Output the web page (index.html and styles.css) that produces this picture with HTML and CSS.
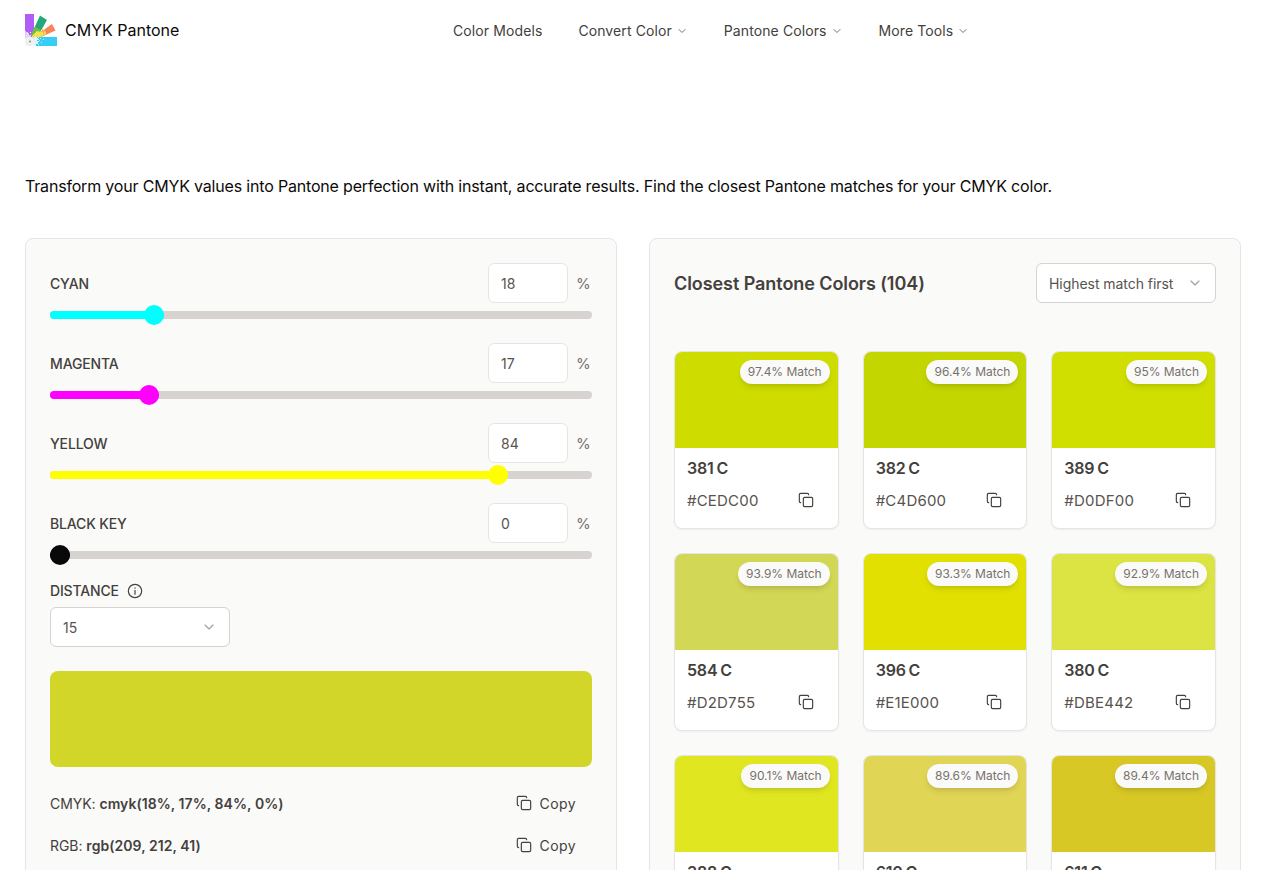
FILE: index.html
```
<!DOCTYPE html>
<html lang="en">
<head>
    <meta charset="UTF-8">
    <meta name="viewport" content="width=device-width, initial-scale=1.0">
    <title>CMYK Pantone</title>
    <link rel="stylesheet" href="styles.css">
</head>
<body>
    <!-- Shared icons -->
    <svg class="icon-defs" aria-hidden="true">
        <symbol id="icon-copy" viewBox="0 0 24 24">
            <rect x="8" y="8" width="14" height="14" rx="2"/>
            <path d="M4 16c-1.1 0-2-.9-2-2V4c0-1.1.9-2 2-2h10c1.1 0 2 .9 2 2"/>
        </symbol>
        <symbol id="icon-chevron" viewBox="0 0 24 24">
            <path d="m6 9 6 6 6-6"/>
        </symbol>
    </svg>

    <div class="page">
        <header class="header">
            <a class="brand" href="#">
                <svg class="logo" viewBox="0 0 32 32">
                    <rect width="9" height="23" fill="#b35cf5"/>
                    <path d="M15 1.5l7 4.5-8.500 15-7-1z" fill="#24a878"/>
                    <path d="M10 13l6 3-5 7-6-1z" fill="#6cc04a"/>
                    <path d="M27 10l3.500 6.500L16 23l-3-3z" fill="#fa8358"/>
                    <path d="M7 22l5-5 4 1 2-2 3 1v3l-8 4H7z" fill="#f4e34f"/>
                    <path d="M17 15h1v1h1v1h2v1h-2v2h-1v-2h-2v-1h1z" fill="#f5b44b"/>
                    <path d="M0 17h1v1h2v1h1v2h2v2h3v2H0z" fill="#e2c9f6"/>
                    <path d="M2 19h1v1H2zM5 18h1v1H5zM3 21h1v1H3zM1 21h1v1H1z" fill="#fff"/>
                    <rect x="9" y="23" width="23" height="9" fill="#38cdf5"/>
                    <path d="M9 23h3v1h1v1h1v1h-2v1h2v1h-1v2h-2v2H9z" fill="#dcf5f8"/>
                    <path d="M13 23h1v1h-1zM15 24h1v1h-1zM14 26h1v1h-1zM16 28h1v1h-1zM13 30h1v1h-1zM18 25h1v1h-1z" fill="#c4f0f8"/>
                    <rect y="23" width="9" height="9" rx="3" fill="#f0f0ef"/>
                    <circle cx="5" cy="27.500" r="1" fill="#8b8b8b"/>
                </svg>
                <span class="brand-name">CMYK Pantone</span>
            </a>
            <nav class="nav">
                <a href="#">Color Models</a>
                <a href="#">Convert Color <svg class="icon"><use href="#icon-chevron"/></svg></a>
                <a href="#">Pantone Colors <svg class="icon"><use href="#icon-chevron"/></svg></a>
                <a href="#">More Tools <svg class="icon"><use href="#icon-chevron"/></svg></a>
            </nav>
        </header>

        <p class="intro">Transform your CMYK values into Pantone perfection with instant, accurate results. Find the closest Pantone matches for your CMYK color.</p>

        <main class="panels">
            <section class="panel">
                <div id="channels"></div>

                <div class="distance-label">
                    <span class="label">DISTANCE</span>
                    <svg class="icon info" viewBox="0 0 24 24"><circle cx="12" cy="12" r="10"/><path d="M12 17v-6M12 7.2v.6"/></svg>
                </div>
                <div class="select">15 <svg class="icon"><use href="#icon-chevron"/></svg></div>

                <div class="preview"></div>

                <div class="value-row">
                    <span class="value">CMYK: <b>cmyk(18%, 17%, 84%, 0%)</b></span>
                    <button class="copy-button"><svg class="icon"><use href="#icon-copy"/></svg>Copy</button>
                </div>
                <div class="value-row">
                    <span class="value">RGB: <b>rgb(209, 212, 41)</b></span>
                    <button class="copy-button"><svg class="icon"><use href="#icon-copy"/></svg>Copy</button>
                </div>
            </section>

            <section class="panel">
                <div class="results-header">
                    <h2>Closest Pantone Colors (104)</h2>
                    <div class="select sort">Highest match first <svg class="icon"><use href="#icon-chevron"/></svg></div>
                </div>
                <div class="color-grid" id="color-grid"></div>
            </section>
        </main>
    </div>

    <script>
        const channels = [
            { name: 'CYAN', value: 18, color: '#00ffff' },
            { name: 'MAGENTA', value: 17, color: '#ff00ff' },
            { name: 'YELLOW', value: 84, color: '#ffff00' },
            { name: 'BLACK KEY', value: 0, color: '#090909' }
        ];

        const colors = [
            { name: '381 C', hex: '#CEDC00', match: '97.4' },
            { name: '382 C', hex: '#C4D600', match: '96.4' },
            { name: '389 C', hex: '#D0DF00', match: '95' },
            { name: '584 C', hex: '#D2D755', match: '93.9' },
            { name: '396 C', hex: '#E1E000', match: '93.3' },
            { name: '380 C', hex: '#DBE442', match: '92.9' },
            { name: '388 C', hex: '#E0E721', match: '90.1' },
            { name: '610 C', hex: '#E1D555', match: '89.6' },
            { name: '611 C', hex: '#D7C826', match: '89.4' }
        ];

        document.getElementById('channels').innerHTML = channels.map(c => `
            <div class="channel">
                <div class="channel-head">
                    <label class="label">${c.name}</label>
                    <input class="channel-input" value="${c.value}">
                    <span class="percent">%</span>
                </div>
                <div class="track">
                    <div class="range" style="width: calc(20px + (100% - 20px) * ${c.value / 100}); background: ${c.color}">
                        <span class="thumb" style="background: ${c.color}"></span>
                    </div>
                </div>
            </div>`).join('');

        document.getElementById('color-grid').innerHTML = colors.map(c => `
            <article class="color-card">
                <div class="swatch" style="background: ${c.hex}">
                    <span class="badge">${c.match}% Match</span>
                </div>
                <div class="color-info">
                    <h3>${c.name}</h3>
                    <div class="hex-row">
                        <span>${c.hex}</span>
                        <svg class="icon"><use href="#icon-copy"/></svg>
                    </div>
                </div>
            </article>`).join('');
    </script>
</body>
</html>
```
FILE: styles.css
```
* {
    box-sizing: border-box;
}

body {
    margin: 0;
    font-family: Inter, "Open Sans", sans-serif;
    font-size: 14px;
    color: #44403c;
    background: #fff;
}

h2, h3, p {
    margin: 0;
}

a {
    color: inherit;
    text-decoration: none;
}

.icon-defs {
    position: absolute;
    width: 0;
    height: 0;
}

.icon {
    width: 16px;
    height: 16px;
    flex: none;
    fill: none;
    stroke: currentColor;
    stroke-width: 1.75;
    stroke-linecap: round;
    stroke-linejoin: round;
}

.page {
    height: 100vh;
    padding: 0 25px;
    overflow: hidden;
}

/* Header */
.header {
    display: grid;
    grid-template-columns: 428px 1fr;
    align-items: center;
    height: 60px;
}

.brand {
    display: flex;
    align-items: center;
    gap: 8px;
    color: #0c0a09;
    font-size: 16px;
}

.brand-name {
    font-weight: 400;
}

.logo {
    width: 32px;
    height: 32px;
}

.nav {
    display: flex;
    gap: 36px;
    padding-top: 1px;
    letter-spacing: 0.1px;
}

.nav a {
    display: flex;
    align-items: center;
    gap: 4px;
    white-space: nowrap;
}

.nav .icon {
    width: 12px;
    height: 12px;
    color: #78716c;
    stroke-width: 2;
}

.intro {
    padding-top: 114px;
    height: 178px;
    font-size: 16px;
    line-height: 24px;
    letter-spacing: -0.18px;
    white-space: nowrap;
    color: #0c0a09;
}

/* Panels */
.panels {
    display: grid;
    grid-template-columns: 1fr 1fr;
    gap: 32px;
}

.panel {
    height: 900px;
    padding: 24px;
    background: #fafaf9;
    border: 1px solid #e5e5e5;
    border-radius: 8px;
}

.label {
    font-weight: 500;
    letter-spacing: -0.15px;
}

.channel {
    height: 80px;
}

.channel-head {
    display: flex;
    align-items: center;
    height: 40px;
}

.channel-input {
    width: 80px;
    height: 40px;
    margin-left: auto;
    padding: 0 12px;
    border: 1px solid #e5e5e5;
    border-radius: 6px;
    background: #fff;
    font: inherit;
    color: #57534e;
}

.percent {
    width: 24px;
    padding-left: 8px;
    font-size: 15px;
    color: #78716c;
}

.track {
    height: 8px;
    margin-top: 8px;
    border-radius: 4px;
    background: #d6d3d1;
}

.range {
    display: flex;
    align-items: center;
    justify-content: flex-end;
    height: 8px;
    border-radius: 4px;
}

.thumb {
    width: 20px;
    height: 20px;
    border-radius: 50%;
}

.distance-label {
    display: flex;
    align-items: center;
    gap: 8px;
    height: 15px;
    margin-bottom: 9px;
}

.select {
    display: flex;
    align-items: center;
    justify-content: space-between;
    width: 180px;
    height: 40px;
    padding: 0 12px;
    background: #fff;
    border: 1px solid #d6d3d1;
    border-radius: 6px;
    letter-spacing: -0.05px;
    color: #57534e;
    white-space: nowrap;
}

.select .icon {
    color: #a29e9a;
}

.preview {
    height: 96px;
    margin: 24px 0 15px;
    border-radius: 8px;
    background: #d1d629;
}

.value-row {
    display: flex;
    align-items: center;
    justify-content: space-between;
    height: 42px;
}

.value {
    letter-spacing: -0.05px;
}

.value b {
    font-weight: 600;
    letter-spacing: 0.05px;
}

.copy-button {
    display: flex;
    align-items: center;
    gap: 8px;
    padding: 8px 16px;
    border: 0;
    background: none;
    font: inherit;
    letter-spacing: 0.4px;
    color: inherit;
}

/* Results */
.results-header {
    display: flex;
    align-items: center;
    justify-content: space-between;
    margin-bottom: 48px;
}

.results-header h2 {
    font-size: 18px;
    font-weight: 600;
    letter-spacing: -0.07px;
    white-space: nowrap;
}

.color-grid {
    display: grid;
    grid-template-columns: repeat(3, 1fr);
    gap: 24px;
}

.color-card {
    height: 178px;
    overflow: hidden;
    background: #fff;
    border: 1px solid #e5e5e5;
    border-radius: 8px;
    box-shadow: 0 1px 2px rgba(0, 0, 0, 0.05);
}

.swatch {
    display: flex;
    align-items: flex-start;
    justify-content: flex-end;
    height: 96px;
    padding: 8px;
}

.badge {
    padding: 0 8px;
    border-radius: 12px;
    background: #fafaf9;
    box-shadow: 0 4px 6px -1px rgba(0, 0, 0, 0.1), 0 2px 4px -2px rgba(0, 0, 0, 0.1);
    font-size: 12px;
    line-height: 24px;
    letter-spacing: -0.03px;
    color: #78716c;
}

.color-info {
    padding: 8px 12px;
}

.color-info h3 {
    font-size: 16px;
    font-weight: 600;
    line-height: 24px;
    letter-spacing: -0.2px;
    word-spacing: -1px;
}

.hex-row {
    display: flex;
    align-items: center;
    justify-content: space-between;
    height: 40px;
    padding-right: 12px;
    font-size: 15px;
    letter-spacing: 0.2px;
    color: #57534e;
}

.hex-row .icon {
    color: #44403c;
}
```
